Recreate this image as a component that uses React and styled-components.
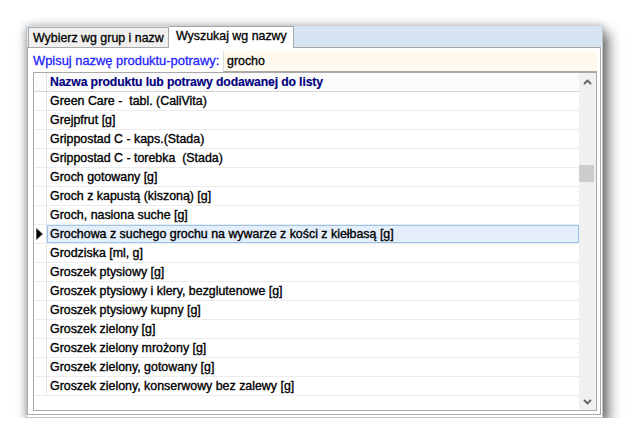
import React from "react";
import styled, { createGlobalStyle } from "styled-components";

const Global = createGlobalStyle`
  body {
    margin: 0;
    background: #ffffff;
    font-family: "Liberation Sans", Arial, sans-serif;
  }
`;

const Window = styled.div`
  margin: 26px 0 0 26px;
  width: 577px;
  height: 392px;
  box-sizing: border-box;
  border: 1px solid #c4c4c4;
  border-top: none;
  background: #ffffff;
  display: flex;
  flex-direction: column;
  box-shadow: 0 0 9px rgba(0, 0, 0, 0.3), 6px 7px 12px rgba(0, 0, 0, 0.5);
`;

const TabBar = styled.div`
  height: 21px;
  background: #d7e4f2;
  display: flex;
  align-items: flex-end;
  padding-left: 1px;
`;

const Tab = styled.div`
  box-sizing: border-box;
  width: ${(p) => (p.active ? 125 : 141)}px;
  height: ${(p) => (p.active ? 22 : 20)}px;
  margin-bottom: ${(p) => (p.active ? -1 : 0)}px;
  padding-left: ${(p) => (p.active ? 7 : 4)}px;
  padding-top: ${(p) => (p.active ? 2 : 3)}px;
  border: 1px solid #a8a8a8;
  border-bottom: none;
  border-left: ${(p) => (p.active ? "none" : "1px solid #a8a8a8")};
  background: ${(p) => (p.active ? "#ffffff" : "#f0f0f0")};
  font-size: 12.4px;
  color: #000;
  -webkit-text-stroke: 0.3px #000;
  white-space: nowrap;
  overflow: hidden;
  position: relative;
  z-index: ${(p) => (p.active ? 1 : 0)};
`;

const Panel = styled.div`
  flex: 1;
  margin: 0 1px 2px 0;
  border: 1px solid #a9a9a9;
  background: #ffffff;
  padding: 3px 3px 3px 5px;
  display: flex;
  flex-direction: column;
  min-height: 0;
`;

const SearchRow = styled.div`
  display: flex;
  height: 21px;
`;

const Label = styled.div`
  width: 190px;
  font-size: 12.9px;
  line-height: 20px;
  color: #1f1fff;
  -webkit-text-stroke: 0.3px #1f1fff;
  white-space: nowrap;
`;

const Input = styled.div`
  flex: 1;
  box-sizing: border-box;
  background: #fff9ee;
  border-left: 1px solid #dcdcdc;
  border-bottom: 1px solid #a9a9a9;
  padding-left: 3px;
  font-size: 12.4px;
  line-height: 20px;
  color: #000;
  -webkit-text-stroke: 0.3px #000;
`;

const Grid = styled.div`
  flex: 1;
  border: 1px solid #a9a9a9;
  display: flex;
  min-height: 0;
`;

const List = styled.div`
  flex: 1;
  display: flex;
  flex-direction: column;
  background: #ffffff;
`;

const Row = styled.div`
  display: flex;
  height: 19px;
  box-sizing: border-box;
  border-bottom: 1px solid ${(p) => (p.header ? "#d6d6d6" : "#ececec")};
  background: ${(p) => (p.header ? "#fbfbfb" : "#ffffff")};
`;

const Indicator = styled.div`
  width: 13px;
  box-sizing: border-box;
  border-right: 1px solid #e2e2e2;
  display: flex;
  align-items: center;
  justify-content: center;
  padding-right: 2px;
`;

const Cell = styled.div`
  flex: 1;
  box-sizing: border-box;
  padding-left: ${(p) => (p.selected ? 2 : 3)}px;
  font-size: ${(p) => (p.header ? "12.2px" : "12.4px")};
  font-weight: ${(p) => (p.header ? "bold" : "normal")};
  letter-spacing: ${(p) => (p.header ? "-0.12px" : "0")};
  color: ${(p) => (p.header ? "#000080" : "#000000")};
  line-height: ${(p) => (p.selected ? 16 : 18)}px;
  white-space: pre;
  background: ${(p) => (p.selected ? "#e4effb" : "transparent")};
  border: ${(p) => (p.selected ? "1px solid #9cc4ea" : "none")};
  -webkit-text-stroke: ${(p) => (p.header ? "0.15px #000080" : "0.35px #000")};
`;

const Scrollbar = styled.div`
  width: 17px;
  background: #f0f0f0;
  display: flex;
  flex-direction: column;
`;

const ScrollButton = styled.div`
  height: 17px;
  display: flex;
  align-items: center;
  justify-content: center;
  margin-top: ${(p) => (p.down ? "auto" : "0")};
`;

const Thumb = styled.div`
  height: 17px;
  margin: 75px 2px 0 0;
  background: #cdcdcd;
`;

const items = [
  "Green Care -  tabl. (CaliVita)",
  "Grejpfrut [g]",
  "Grippostad C - kaps.(Stada)",
  "Grippostad C - torebka  (Stada)",
  "Groch gotowany [g]",
  "Groch z kapustą (kiszoną) [g]",
  "Groch, nasiona suche [g]",
  "Grochowa z suchego grochu na wywarze z kości z kiełbasą [g]",
  "Grodziska [ml, g]",
  "Groszek ptysiowy [g]",
  "Groszek ptysiowy i klery, bezglutenowe [g]",
  "Groszek ptysiowy kupny [g]",
  "Groszek zielony [g]",
  "Groszek zielony mrożony [g]",
  "Groszek zielony, gotowany [g]",
  "Groszek zielony, konserwowy bez zalewy [g]",
];

const SELECTED = 7;

const Pointer = () => (
  <svg width="7" height="12" viewBox="0 0 7 12">
    <polygon points="0.5,0.5 6.5,6 0.5,11.5" fill="#000" stroke="#444" strokeWidth="0.7" />
  </svg>
);

const Chevron = ({ down }) => (
  <svg width="9" height="6" viewBox="0 0 9 6">
    <polyline
      points={down ? "1,1 4.5,4.5 8,1" : "1,5 4.5,1.5 8,5"}
      fill="none"
      stroke="#606060"
      strokeWidth="1.8"
    />
  </svg>
);

export default function App() {
  return (
    <>
      <Global />
      <Window>
        <TabBar>
          <Tab>Wybierz wg grup i nazw</Tab>
          <Tab active>Wyszukaj wg nazwy</Tab>
        </TabBar>
        <Panel>
          <SearchRow>
            <Label>Wpisuj nazwę produktu-potrawy:</Label>
            <Input>grocho</Input>
          </SearchRow>
          <Grid>
            <List>
              <Row header>
                <Indicator />
                <Cell header>Nazwa produktu lub potrawy dodawanej do listy</Cell>
              </Row>
              {items.map((t, i) => (
                <Row key={i}>
                  <Indicator>{i === SELECTED ? <Pointer /> : null}</Indicator>
                  <Cell selected={i === SELECTED}>{t}</Cell>
                </Row>
              ))}
            </List>
            <Scrollbar>
              <ScrollButton>
                <Chevron />
              </ScrollButton>
              <Thumb />
              <ScrollButton down>
                <Chevron down />
              </ScrollButton>
            </Scrollbar>
          </Grid>
        </Panel>
      </Window>
    </>
  );
}
